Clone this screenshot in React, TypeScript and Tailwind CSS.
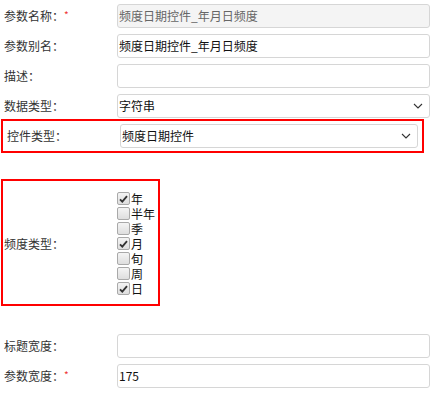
import React from 'react'

const font = { fontFamily: '"Microsoft YaHei", "Noto Sans CJK SC", "Liberation Sans", sans-serif' }

function Row({ label, required, children, className = '' }: { label: string; required?: boolean; children: React.ReactNode; className?: string }) {
  return (
    <div className={`flex h-[30px] items-center pl-[4px] pr-[3px] ${className}`}>
      <div className="w-[113px] shrink-0 text-[12px] text-[#333]">
        {label}：{required && <span className="text-[#e33] text-[10px] align-top">*</span>}
      </div>
      <div className="flex-1">{children}</div>
    </div>
  )
}

function TextInput({ value = '', disabled }: { value?: string; disabled?: boolean }) {
  return (
    <div
      className={`h-[24px] flex items-center rounded-[3px] border border-[#d6d6d6] pl-[1px] text-[12px] ${
        disabled ? 'bg-[#f4f4f4] text-[#666]' : 'bg-white text-[#111]'
      }`}
    >
      {value}
    </div>
  )
}

function Select({ value }: { value: string }) {
  return (
    <div className="h-[24px] flex items-center justify-between rounded-[3px] border border-[#d6d6d6] bg-white pl-[1px] pr-[6px] text-[12px] text-[#111]">
      <span>{value}</span>
      <svg width="10" height="6" viewBox="0 0 10 6" fill="none">
        <path d="M1 1l4 4 4-4" stroke="#333" strokeWidth="1.1" />
      </svg>
    </div>
  )
}

function Check({ label, checked }: { label: string; checked?: boolean }) {
  return (
    <div className="flex h-[15px] items-center">
      <span className="flex h-[13px] w-[13px] shrink-0 items-center justify-center rounded-[2px] border border-[#a9a9a9] bg-gradient-to-b from-[#f4f4f4] to-[#dedede]">
        {checked && (
          <svg width="9" height="8" viewBox="0 0 9 8">
            <path d="M1 4.3l2.3 2.4L8 1.2" stroke="#333" strokeWidth="1.8" fill="none" />
          </svg>
        )}
      </span>
      <span className="ml-[1px] text-[12px] leading-[15px] text-[#111]">{label}</span>
    </div>
  )
}

export default function App() {
  const freqs = [
    { label: '年', checked: true },
    { label: '半年' },
    { label: '季' },
    { label: '月', checked: true },
    { label: '旬' },
    { label: '周' },
    { label: '日', checked: true },
  ]

  return (
    <div className="w-[433px] h-[397px] bg-white pt-[1px]" style={font}>
      <Row label="参数名称" required>
        <TextInput value="频度日期控件_年月日频度" disabled />
      </Row>
      <Row label="参数别名">
        <TextInput value="频度日期控件_年月日频度" />
      </Row>
      <Row label="描述">
        <TextInput />
      </Row>
      <Row label="数据类型">
        <Select value="字符串" />
      </Row>
      <Row label="控件类型" className="ml-[3px] w-[419px] pl-[1px] pr-[4px] outline-2 outline-[#f00]">
        <Select value="频度日期控件" />
      </Row>

      <div className="ml-[3px] mt-[30px] flex w-[155px] items-center pl-[1px] pt-[10px] pb-[8px] outline-2 outline-[#f00]">
        <div className="w-[113px] shrink-0 text-[12px] text-[#333]">频度类型：</div>
        <div className="flex flex-col">
          {freqs.map((f) => (
            <Check key={f.label} label={f.label} checked={f.checked} />
          ))}
        </div>
      </div>

      <div className="mt-[27px]">
        <Row label="标题宽度">
          <TextInput />
        </Row>
        <Row label="参数宽度" required>
          <TextInput value="175" />
        </Row>
      </div>
    </div>
  )
}
